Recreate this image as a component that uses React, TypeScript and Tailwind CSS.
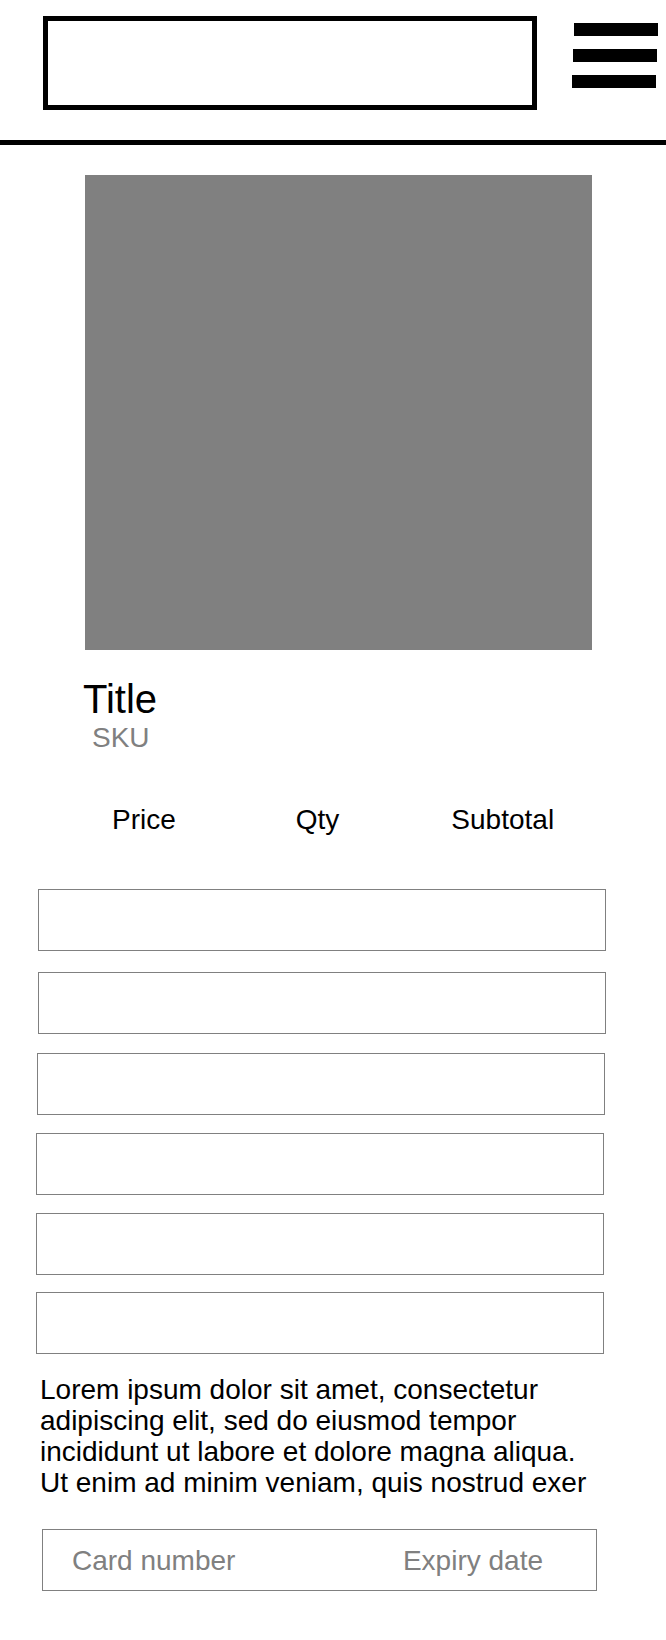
import React from 'react';

const fields = [
  { id: 'f1', className: 'mt-[54px] ml-[38px] w-[568px]' },
  { id: 'f2', className: 'mt-[21px] ml-[38px] w-[568px]' },
  { id: 'f3', className: 'mt-[19px] ml-[37px] w-[568px]' },
  { id: 'f4', className: 'mt-[18px] ml-[36px] w-[568px]' },
  { id: 'f5', className: 'mt-[18px] ml-[36px] w-[568px]' },
  { id: 'f6', className: 'mt-[17px] ml-[36px] w-[568px]' },
];

function Header() {
  return (
    <header>
      <div className="flex items-start pt-[16px]">
        {/* Logo placeholder */}
        <div className="ml-[43px] h-[94px] w-[494px] border-[5px] border-black" />
        {/* Menu */}
        <div className="ml-[35px] mt-[7px] flex flex-col gap-[13px]">
          <div className="ml-[2px] h-[13px] w-[84px] bg-black" />
          <div className="ml-[1px] h-[13px] w-[84px] bg-black" />
          <div className="h-[13px] w-[84px] bg-black" />
        </div>
      </div>
      <div className="mt-[30px] h-[5px] w-full bg-black" />
    </header>
  );
}

function Product() {
  return (
    <section>
      <div className="ml-[85px] mt-[30px] h-[475px] w-[507px] bg-[#808080]" />
      <div className="ml-[83px] mt-[27px] text-[40px] leading-[44px] text-black">Title</div>
      <div className="ml-[92px] mt-px text-[28px] leading-[31px] text-[#808080]">SKU</div>

      <div className="mt-[51px] flex text-[28px] leading-[31px] text-black">
        <span className="ml-[112px]">Price</span>
        <span className="ml-[120px]">Qty</span>
        <span className="ml-[112px]">Subtotal</span>
      </div>
    </section>
  );
}

export default function App() {
  return (
    <div className="min-h-[1640px] w-[666px] bg-white font-['Liberation_Sans',Arial,sans-serif]">
      <Header />
      <Product />

      {fields.map(f => (
        <div key={f.id} className={`h-[62px] border border-[#808080] bg-white ${f.className}`} />
      ))}

      <p className="ml-[40px] mt-[20px] w-[560px] text-[28px] leading-[31px] text-black">
        Lorem ipsum dolor sit amet, consectetur adipiscing elit, sed do eiusmod tempor incididunt ut labore et dolore magna aliqua. Ut enim ad minim veniam, quis nostrud exer
      </p>

      <div className="ml-[42px] mt-[31px] flex h-[62px] w-[555px] items-center justify-between border border-[#808080] pl-[29px] pr-[53px] text-[28px] leading-[31px] text-[#808080]">
        <span>Card number</span>
        <span>Expiry date</span>
      </div>
    </div>
  );
}
